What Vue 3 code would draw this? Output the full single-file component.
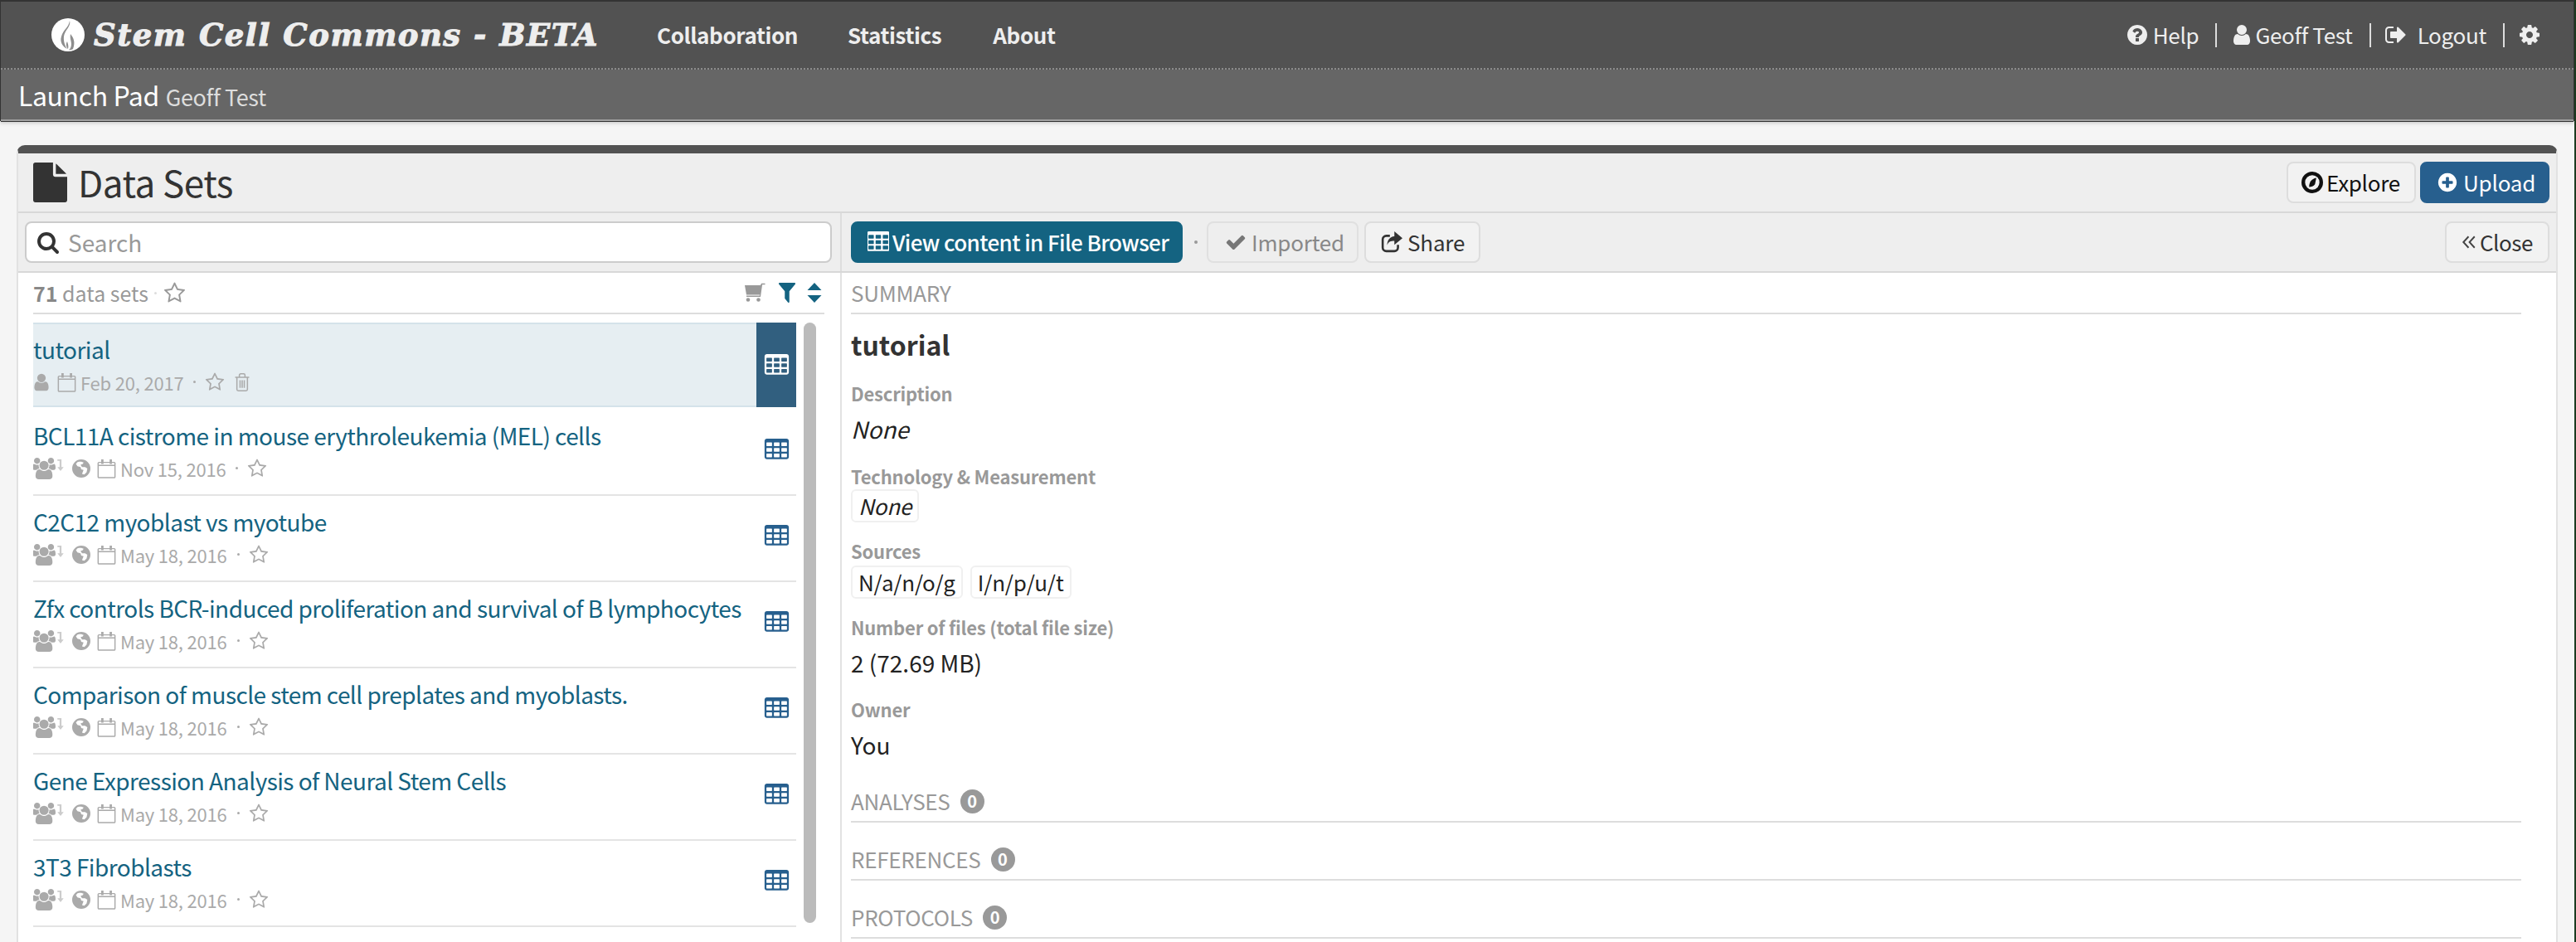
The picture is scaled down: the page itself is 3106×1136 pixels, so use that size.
<template>
  <div class="page">
    <svg class="defs" aria-hidden="true">
      <symbol id="i-star" viewBox="0 0 1792 1792"><path d="M1201 1004l306-297-422-62-189-382-189 382-422 62 306 297-73 421 378-199 377 199zm527-357q0 22-26 48l-363 354 86 500q1 7 1 20 0 50-41 50-19 0-40-12l-449-236-449 236q-22 12-40 12-21 0-31.5-14.5t-10.5-35.5q0-6 2-20l86-500-364-354q-25-27-25-48 0-37 56-46l502-73 225-455q19-41 49-41t49 41l225 455 502 73q56 9 56 46z"/></symbol>
      <symbol id="i-user" viewBox="0 0 1792 1792"><path d="M1536 1399q0 109-62.5 187t-150.5 78h-854q-88 0-150.5-78t-62.5-187q0-85 8.5-160.5t31.5-152 58.5-131 94-89 134.5-34.5q131 128 313 128t313-128q76 0 134.5 34.5t94 89 58.5 131 31.5 152 8.5 160.5zm-256-887q0 159-112.5 271.5t-271.5 112.5-271.5-112.5-112.5-271.5 112.5-271.5 271.5-112.5 271.5 112.5 112.5 271.5z"/></symbol>
      <symbol id="i-help" viewBox="0 0 1792 1792"><path d="M1024 1376v-192q0-14-9-23t-23-9h-192q-14 0-23 9t-9 23v192q0 14 9 23t23 9h192q14 0 23-9t9-23zm256-672q0-88-55.5-163t-138.5-116-170-41q-243 0-371 213-15 24 8 42l132 100q7 6 19 6 16 0 25-12 53-68 86-92 34-24 86-24 48 0 85.5 26t37.5 59q0 38-20 61t-68 45q-63 28-115.5 86.5t-52.5 125.5v36q0 14 9 23t23 9h192q14 0 23-9t9-23q0-19 21.5-49.5t54.5-49.5q32-18 49-28.5t46-35 44.5-48 28-60.5 12.5-81zm384 192q0 209-103 385.5t-279.5 279.5-385.5 103-385.5-103-279.5-279.5-103-385.5 103-385.5 279.5-279.5 385.5-103 385.5 103 279.5 279.5 103 385.5z"/></symbol>
      <symbol id="i-logout" viewBox="0 0 1792 1792"><path d="M704 1440q0 4 1 20t.5 26.5-3 23.5-10 19.5-20.5 6.5h-320q-119 0-203.5-84.5t-84.5-203.5v-704q0-119 84.5-203.5t203.5-84.5h320q13 0 22.5 9.5t9.5 22.5q0 4 1 20t.5 26.5-3 23.5-10 19.5-20.5 6.5h-320q-66 0-113 47t-47 113v704q0 66 47 113t113 47h312l11.5 1 11.5 3 8 5.5 7 9 2 13.5zm928-544q0 26-19 45l-544 544q-19 19-45 19t-45-19-19-45v-288h-448q-26 0-45-19t-19-45v-384q0-26 19-45t45-19h448v-288q0-26 19-45t45-19 45 19l544 544q19 19 19 45z"/></symbol>
      <symbol id="i-cog" viewBox="0 0 1792 1792"><path d="M1152 896q0-106-75-181t-181-75-181 75-75 181 75 181 181 75 181-75 75-181zm512-109v222q0 12-8 23t-20 13l-185 28q-19 54-39 91 35 50 107 138 10 12 10 25t-9 23q-27 37-99 108t-94 71q-12 0-26-9l-138-108q-44 23-91 38-16 136-29 186-7 28-36 28h-222q-14 0-24.5-8.5t-11.5-21.5l-28-184q-49-16-90-37l-141 107q-10 9-25 9-14 0-25-11-126-114-165-168-7-10-7-23 0-12 8-23 15-21 51-66.5t54-70.5q-27-50-41-99l-183-27q-13-2-21-12.5t-8-23.5v-222q0-12 8-23t19-13l186-28q14-46 39-92-40-57-107-138-10-12-10-24 0-10 9-23 26-36 98.5-107.5t94.5-71.5q13 0 26 10l138 107q44-23 91-38 16-136 29-186 7-28 36-28h222q14 0 24.5 8.5t11.5 21.5l28 184q49 16 90 37l142-107q9-9 24-9 13 0 25 10 129 119 165 170 7 8 7 22 0 12-8 23-15 21-51 66.5t-54 70.5q26 50 41 98l183 28q13 2 21 12.5t8 23.5z"/></symbol>
      <symbol id="i-search" viewBox="0 0 1792 1792"><path d="M1216 832q0-185-131.5-316.5t-316.5-131.5-316.5 131.5-131.5 316.5 131.5 316.5 316.5 131.5 316.5-131.5 131.5-316.5zm512 832q0 52-38 90t-90 38q-54 0-90-38l-343-342q-179 124-399 124-143 0-273.5-55.5t-225-150-150-225-55.5-273.5 55.5-273.5 150-225 225-150 273.5-55.5 273.5 55.5 225 150 150 225 55.5 273.5q0 220-124 399l343 343q37 37 37 90z"/></symbol>
      <symbol id="i-table" viewBox="128 128 1536 1536"><path d="M576 1376v-192q0-14-9-23t-23-9h-320q-14 0-23 9t-9 23v192q0 14 9 23t23 9h320q14 0 23-9t9-23zm0-384v-192q0-14-9-23t-23-9h-320q-14 0-23 9t-9 23v192q0 14 9 23t23 9h320q14 0 23-9t9-23zm512 384v-192q0-14-9-23t-23-9h-320q-14 0-23 9t-9 23v192q0 14 9 23t23 9h320q14 0 23-9t9-23zm-512-768v-192q0-14-9-23t-23-9h-320q-14 0-23 9t-9 23v192q0 14 9 23t23 9h320q14 0 23-9t9-23zm512 384v-192q0-14-9-23t-23-9h-320q-14 0-23 9t-9 23v192q0 14 9 23t23 9h320q14 0 23-9t9-23zm512 384v-192q0-14-9-23t-23-9h-320q-14 0-23 9t-9 23v192q0 14 9 23t23 9h320q14 0 23-9t9-23zm-512-768v-192q0-14-9-23t-23-9h-320q-14 0-23 9t-9 23v192q0 14 9 23t23 9h320q14 0 23-9t9-23zm512 384v-192q0-14-9-23t-23-9h-320q-14 0-23 9t-9 23v192q0 14 9 23t23 9h320q14 0 23-9t9-23zm0-384v-192q0-14-9-23t-23-9h-320q-14 0-23 9t-9 23v192q0 14 9 23t23 9h320q14 0 23-9t9-23zm128-320v1088q0 66-47 113t-113 47h-1344q-66 0-113-47t-47-113v-1088q0-66 47-113t113-47h1344q66 0 113 47t47 113z"/></symbol>
      <symbol id="i-check" viewBox="0 0 1792 1792"><path d="M1671 566q0 40-28 68l-724 724-136 136q-28 28-68 28t-68-28l-136-136-362-362q-28-28-28-68t28-68l136-136q28-28 68-28t68 28l294 295 656-657q28-28 68-28t68 28l136 136q28 28 28 68z"/></symbol>
      <symbol id="i-plus" viewBox="0 0 1792 1792"><path d="M1344 960v-128q0-26-19-45t-45-19h-256v-256q0-26-19-45t-45-19h-128q-26 0-45 19t-19 45v256h-256q-26 0-45 19t-19 45v128q0 26 19 45t45 19h256v256q0 26 19 45t45 19h128q26 0 45-19t19-45v-256h256q26 0 45-19t19-45zm320-64q0 209-103 385.5t-279.5 279.5-385.5 103-385.5-103-279.5-279.5-103-385.5 103-385.5 279.5-279.5 385.5-103 385.5 103 279.5 279.5 103 385.5z"/></symbol>
      <symbol id="i-filter" viewBox="128 256 1536 1408" preserveAspectRatio="none"><path d="M1595 295q17 41-14 70l-493 493v742q0 42-39 59-13 5-25 5-27 0-45-19l-256-256q-19-19-19-45v-486l-493-493q-31-29-14-70 17-39 59-39h1280q42 0 59 39z"/></symbol>
      <symbol id="i-file" viewBox="128 0 1536 1792"><path d="M1152 512v-472q22 14 36 28l408 408q14 14 28 36h-472zm-128 32q0 40 28 68t68 28h544v1056q0 40-28 68t-68 28h-1344q-40 0-68-28t-28-68v-1600q0-40 28-68t68-28h800v544z"/></symbol>
      <symbol id="i-users" viewBox="0 0 1920 1792"><path d="M529 896q-162 5-265 128h-134q-82 0-138-40.5t-56-118.5q0-353 124-353 6 0 43.5 21t97.5 42.5 119 21.5q67 0 133-23-5 37-5 66 0 139 81 256zm1071 637q0 120-73 189.5t-194 69.5h-874q-121 0-194-69.5t-73-189.5q0-53 3.5-103.5t14-109 26.5-108.5 43-97.5 62-81 85.5-53.5 111.5-20q10 0 43 21.5t73 48 107 48 135 21.5 135-21.5 107-48 73-48 43-21.5q61 0 111.5 20t85.5 53.5 62 81 43 97.5 26.5 108.5 14 109 3.5 103.5zm-1024-1277q0 106-75 181t-181 75-181-75-75-181 75-181 181-75 181 75 75 181zm704 384q0 159-112.5 271.5t-271.5 112.5-271.5-112.5-112.5-271.5 112.5-271.5 271.5-112.5 271.5 112.5 112.5 271.5zm576 225q0 78-56 118.5t-138 40.5h-134q-103-123-265-128 81-117 81-256 0-29-5-66 66 23 133 23 59 0 119-21.5t97.5-42.5 43.5-21q124 0 124 353zm-128-609q0 106-75 181t-181 75-181-75-75-181 75-181 181-75 181 75 75 181z"/></symbol>
      <symbol id="i-cal" viewBox="0 0 24 26"><path fill="none" stroke="currentColor" stroke-width="1.6" d="M2 5h20a1 1 0 0 1 1 1v18a1 1 0 0 1-1 1H2a1 1 0 0 1-1-1V6a1 1 0 0 1 1-1zM1 9h22"/><path d="M5 1h3v6H5zM16 1h3v6h-3z"/></symbol>
      <symbol id="i-trash" viewBox="0 0 22 26"><path fill="none" stroke="currentColor" stroke-width="1.8" d="M1 6h20M3.5 6v17a2 2 0 0 0 2 2h11a2 2 0 0 0 2-2V6M7 6V3a2 2 0 0 1 2-2h4a2 2 0 0 1 2 2v3M8 10v11M11 10v11M14 10v11"/></symbol>
      <symbol id="i-globe" viewBox="0 0 24 24"><path fill-rule="evenodd" d="M12 0a12 12 0 1 1 0 24a12 12 0 0 1 0-24zM7 3.500 5 6l2 3 4 1 1 3 3 1-2 5 3 1 3-3 1-5-3-2-4 0-2-3 3-1 1-2-3-1-3 0z"/></symbol>
      <symbol id="i-cart" viewBox="0 0 26 24"><path d="M1 3h19l-.8 11.500H3L1 3zM20 3l1-2.200h4.500v1.400h-3.400L20 17H3v-1.500h16z"/><circle cx="5" cy="20.500" r="2.300"/><circle cx="17.500" cy="20.500" r="2.300"/></symbol>
      <symbol id="i-sort" viewBox="0 0 18 24"><path d="M9 0l8.500 9H.5zM9 24L.5 15h17z"/></symbol>
      <symbol id="i-down" viewBox="0 0 8 16"><path d="M0 1h5.200v10H8l-4 5-4-5h2.800V3H0z"/></symbol>
    </svg>

    <header class="topbar">
      <nav class="nav">
        <a class="brand">
          <svg class="brand-icon" viewBox="0 0 40 40">
            <circle cx="20" cy="20" r="20" fill="#fff"/>
            <path fill="#8d8d8d" d="M22 3c2 7-6 11-7 19-.6 5 1 11 4 15-6-3-9-9-7-15 2-8 9-11 10-19zm1 16c4 5 6 10 3 18 0 0-3 2-5 1 2-1 3-4 3-7 0-4-2-7-1-12zm-4 9c1 3 2 6 1 9-2-2-3-6-1-9z"/>
          </svg>
          <span class="brand-text">Stem Cell Commons - BETA</span>
        </a>
        <a v-for="link in navLinks" :key="link" class="nav-link">{{ link }}</a>
        <div class="nav-right">
          <a class="nav-util"><svg class="util-icon"><use href="#i-help"/></svg>Help</a>
          <span class="nav-sep"></span>
          <a class="nav-util"><svg class="util-icon user-icon"><use href="#i-user"/></svg>Geoff Test</a>
          <span class="nav-sep"></span>
          <a class="nav-util"><svg class="util-icon logout-icon"><use href="#i-logout"/></svg>Logout</a>
          <span class="nav-sep"></span>
          <a class="nav-util"><svg class="util-icon cog-icon"><use href="#i-cog"/></svg></a>
        </div>
      </nav>
      <div class="subbar">
        <span class="sub-title">Launch Pad</span>
        <span class="sub-user">Geoff Test</span>
      </div>
    </header>

    <main class="panel">
      <div class="panel-head">
        <div class="panel-title">
          <svg class="file-icon"><use href="#i-file"/></svg>
          <h1>Data Sets</h1>
        </div>
        <div class="btn-row">
          <button class="btn">
            <svg class="btn-icon" viewBox="0 0 24 24">
              <circle cx="12" cy="12" r="10" fill="none" stroke="currentColor" stroke-width="4"/>
              <path d="M16.500 7 15 14c-1.500 2-4 3-6.500 3C8.500 12 11 8 16.500 7z"/>
            </svg>Explore
          </button>
          <button class="btn btn-upload"><svg class="btn-icon"><use href="#i-plus"/></svg>Upload</button>
        </div>
      </div>

      <div class="toolbar">
        <div class="toolbar-left">
          <label class="search">
            <svg class="search-icon"><use href="#i-search"/></svg>
            <input type="text" placeholder="Search" />
          </label>
        </div>
        <div class="toolbar-right">
          <button class="btn btn-view"><svg class="btn-icon view-icon"><use href="#i-table"/></svg>View content in File Browser</button>
          <span class="dot"></span>
          <button class="btn btn-muted"><svg class="btn-icon"><use href="#i-check"/></svg>Imported</button>
          <button class="btn btn-share">
            <svg class="btn-icon" viewBox="0 0 24 24">
              <path fill="none" stroke="currentColor" stroke-width="2.400" d="M10 5H6a4 4 0 0 0-4 4v9a4 4 0 0 0 4 4h9a4 4 0 0 0 4-4v-3"/>
              <path d="M15 0l9 7.500-9 7.500v-4.500c-4 0-7 1-8 5 0-6 3-9.500 8-10z"/>
            </svg>Share
          </button>
          <button class="btn btn-close">
            <svg class="close-icon" viewBox="0 0 16 16"><path fill="none" stroke="currentColor" stroke-width="1.700" d="M7.500 2 2 8l5.500 6M14 2 8.500 8l5.500 6"/></svg>Close
          </button>
        </div>
      </div>

      <div class="content">
        <section class="list-col">
          <div class="list-head">
            <span class="count"><b>71</b> data sets</span>
            <span class="small-dot"></span>
            <svg class="head-star"><use href="#i-star"/></svg>
            <span class="head-tools">
              <svg class="tool cart"><use href="#i-cart"/></svg>
              <svg class="tool funnel"><use href="#i-filter"/></svg>
              <svg class="tool sorter"><use href="#i-sort"/></svg>
            </span>
          </div>
          <div class="list">
            <div
              v-for="item in dataSets"
              :key="item.title"
              class="row"
              :class="{ active: item.owned }"
            >
              <div class="row-main">
                <a class="row-title">{{ item.title }}</a>
                <div class="row-meta">
                  <template v-if="item.owned">
                    <svg class="m-user"><use href="#i-user"/></svg>
                  </template>
                  <template v-else>
                    <svg class="m-users"><use href="#i-users"/></svg>
                    <svg class="m-down"><use href="#i-down"/></svg>
                    <svg class="m-globe"><use href="#i-globe"/></svg>
                  </template>
                  <svg class="m-cal"><use href="#i-cal"/></svg>
                  <span class="m-date">{{ item.date }}</span>
                  <span class="m-dot"></span>
                  <svg class="m-star"><use href="#i-star"/></svg>
                  <svg v-if="item.owned" class="m-trash"><use href="#i-trash"/></svg>
                </div>
              </div>
              <div class="row-action">
                <svg class="grid-icon"><use href="#i-table"/></svg>
              </div>
            </div>
            <div class="scrollbar"></div>
          </div>
        </section>

        <section class="detail-col">
          <h3 class="sec-head">SUMMARY</h3>
          <h2 class="detail-name">tutorial</h2>
          <div class="label first">Description</div>
          <div class="value"><em>None</em></div>
          <div class="label">Technology &amp; Measurement</div>
          <div class="tags tech"><span class="tag"><em>None</em></span></div>
          <div class="label src">Sources</div>
          <div class="tags srcs">
            <span v-for="s in sources" :key="s" class="tag">{{ s }}</span>
          </div>
          <div class="label num">Number of files (total file size)</div>
          <div class="value">2 (72.69 MB)</div>
          <div class="label owner">Owner</div>
          <div class="value">You</div>
          <div class="sections">
            <h3 v-for="s in sections" :key="s" class="sec-head sec-count">
              {{ s }} <span class="badge">0</span>
            </h3>
          </div>
        </section>
      </div>
    </main>
  </div>
</template>

<script setup>
const navLinks = ['Collaboration', 'Statistics', 'About']
const sources = ['N/a/n/o/g', 'I/n/p/u/t']
const sections = ['ANALYSES', 'REFERENCES', 'PROTOCOLS']

const dataSets = [
  { title: 'tutorial', date: 'Feb 20, 2017', owned: true },
  { title: 'BCL11A cistrome in mouse erythroleukemia (MEL) cells', date: 'Nov 15, 2016' },
  { title: 'C2C12 myoblast vs myotube', date: 'May 18, 2016' },
  { title: 'Zfx controls BCR-induced proliferation and survival of B lymphocytes', date: 'May 18, 2016' },
  { title: 'Comparison of muscle stem cell preplates and myoblasts.', date: 'May 18, 2016' },
  { title: 'Gene Expression Analysis of Neural Stem Cells', date: 'May 18, 2016' },
  { title: '3T3 Fibroblasts', date: 'May 18, 2016' }
]
</script>

<style>
html, body {
  margin: 0;
  background: #1c3a20;
}
</style>

<style scoped>
.page {
  width: 3104px;
  height: 1136px;
  overflow: hidden;
  background: #f5f5f5;
  font-family: "Noto Sans CJK SC", "Open Sans", sans-serif;
  color: #222;
}
.defs {
  position: absolute;
  width: 0;
  height: 0;
}
svg {
  fill: currentColor;
  flex: none;
}

/* top bars */
.topbar {
  box-shadow: 0 2px 5px rgba(0, 0, 0, 0.2);
  border-left: 1px solid #333;
  border-right: 1px solid #333;
}
.nav {
  display: flex;
  align-items: center;
  height: 80px;
  border-top: 2px solid #333;
  background: #525252;
  border-bottom: 2px dotted #8c8c8c;
  color: #eee;
}
.brand {
  display: flex;
  align-items: center;
  width: 791px;
  padding-left: 61px;
  box-sizing: border-box;
}
.brand-icon {
  width: 40px;
  height: 40px;
}
.brand-text {
  margin-left: 11px;
  font-family: "DejaVu Serif", serif;
  font-weight: 700;
  font-style: italic;
  font-size: 37px;
  line-height: 44px;
  letter-spacing: 1.500px;
  -webkit-text-stroke: 1px #eee;
  color: #eee;
  white-space: nowrap;
}
.nav-link {
  margin-right: 60px;
  font-size: 26px;
  font-weight: 700;
  line-height: 40px;
  letter-spacing: -0.400px;
}
.nav-link:nth-of-type(3) {
  margin-right: 62px;
}
.nav-right {
  display: flex;
  align-items: center;
  margin-left: auto;
  padding-right: 39px;
  font-size: 26px;
  letter-spacing: -0.300px;
}
.nav-util {
  display: flex;
  align-items: center;
  line-height: 40px;
}
.util-icon {
  width: 28px;
  height: 28px;
  margin-right: 5px;
}
.user-icon {
  margin-right: 2px;
}
.logout-icon {
  margin-right: 12px;
}
.cog-icon {
  margin-right: 0;
}
.nav-sep {
  width: 2px;
  height: 29px;
  margin: 0 16px 0 20px;
  background: #ddd;
}
.subbar {
  display: flex;
  align-items: baseline;
  height: 60px;
  line-height: 60px;
  padding-left: 21px;
  background: #666;
  border-bottom: 2px solid #a0a0a0;
  color: #fff;
  position: relative;
}
.subbar::after {
  content: "";
  position: absolute;
  left: 0;
  right: 0;
  bottom: -3px;
  height: 1px;
  background: #333;
}
.sub-title {
  font-size: 32px;
  letter-spacing: -0.400px;
}
.sub-user {
  margin-left: 8px;
  font-size: 27px;
  letter-spacing: -0.400px;
  color: #ddd;
}

/* panel */
.panel {
  width: 3064px;
  box-sizing: border-box;
  margin: 29px 0 0 20px;
  border-top: 10px solid #525252;
  border-left: 2px solid #e2e2e2;
  border-right: 2px solid #e2e2e2;
  border-radius: 10px 10px 0 0;
  background: #fff;
}
.panel-head {
  display: flex;
  align-items: center;
  justify-content: space-between;
  height: 70px;
  padding: 0 8px 0 18px;
  background: #eee;
  border-bottom: 2px solid #d8d8d8;
}
.panel-title {
  display: flex;
  align-items: center;
}
.file-icon {
  width: 41px;
  height: 48px;
  color: #333;
}
.panel-title h1 {
  margin: -2px 0 0 13px;
  font-size: 44px;
  font-weight: 400;
  line-height: 60px;
  letter-spacing: -0.500px;
  color: #333;
}
.btn-row {
  display: flex;
  gap: 5px;
}
.btn {
  display: inline-flex;
  align-items: center;
  height: 50px;
  box-sizing: border-box;
  padding: 0 18px;
  border: 2px solid #ddd;
  border-radius: 8px;
  background: #f2f2f2;
  font-family: inherit;
  font-size: 26px;
  line-height: 40px;
  letter-spacing: -0.200px;
  color: #333;
  white-space: nowrap;
}
.btn-icon {
  width: 26px;
  height: 26px;
  margin-right: 6px;
}
.btn-row .btn:first-child {
  width: 156px;
  padding-left: 16px;
  letter-spacing: -0.300px;
  color: #111;
}
.btn-row .btn:first-child .btn-icon {
  margin-right: 4px;
}
.btn-upload {
  width: 156px;
  border-color: #275f8e;
  background: #275f8e;
  color: #fff;
}
.toolbar {
  display: flex;
  height: 70px;
  background: #eee;
  border-bottom: 2px solid #d8d8d8;
}
.toolbar-left {
  display: flex;
  align-items: center;
  width: 993px;
  box-sizing: border-box;
  padding-left: 8px;
  border-right: 2px solid #ddd;
}
.search {
  display: flex;
  align-items: center;
  width: 973px;
  height: 50px;
  box-sizing: border-box;
  padding-left: 12px;
  border: 2px solid #ccc;
  border-radius: 8px;
  background: #fff;
}
.search-icon {
  width: 28px;
  height: 28px;
  color: #333;
}
.search input {
  flex: 1;
  min-width: 0;
  margin-left: 10px;
  border: 0;
  outline: 0;
  padding: 0;
  font-family: inherit;
  font-size: 28px;
  background: transparent;
}
.search input::placeholder {
  color: #999;
  opacity: 1;
}
.toolbar-right {
  display: flex;
  flex: 1;
  align-items: center;
  padding: 0 8px 0 11px;
}
.btn-view {
  width: 400px;
  padding: 0 0 0 18px;
  border-color: #146381;
  background: #146381;
  color: #fff;
  font-weight: 500;
  letter-spacing: -0.600px;
}
.view-icon {
  margin-right: 4px;
}
.dot {
  width: 4px;
  height: 4px;
  margin: 0 11px 0 14px;
  border-radius: 50%;
  background: #999;
}
.btn-muted {
  width: 183px;
  padding: 0 0 0 20px;
  background: #eee;
  border-color: #e0e0e0;
  color: #888;
}
.btn-muted .btn-icon {
  color: #777;
}
.btn-share {
  width: 140px;
  margin-left: 7px;
  padding: 0 0 0 18px;
}
.btn-close {
  width: 126px;
  margin-left: auto;
  padding: 0 0 0 18px;
  letter-spacing: -0.500px;
}
.close-icon {
  width: 18px;
  height: 18px;
  margin-right: 4px;
  color: #444;
}

/* layout below the toolbars */
.content {
  display: flex;
}
.list-col {
  width: 993px;
  box-sizing: border-box;
  padding-left: 18px;
  border-right: 2px solid #e2e2e2;
}
.list-head {
  display: flex;
  align-items: center;
  width: 954px;
  height: 48px;
  border-bottom: 2px solid #ddd;
  color: #999;
}
.count {
  font-size: 25px;
  line-height: 50px;
}
.count b {
  font-weight: 700;
  color: #888;
}
.small-dot {
  width: 3px;
  height: 3px;
  margin: 0 8px 0 7px;
  border-radius: 50%;
  background: #ddd;
}
.head-star {
  width: 27px;
  height: 27px;
}
.head-tools {
  display: flex;
  align-items: center;
  margin-left: auto;
  padding-right: 3px;
}
.tool {
  height: 24px;
}
.cart {
  width: 28px;
  color: #999;
}
.funnel {
  width: 22px;
  margin-left: 14px;
  color: #146381;
}
.sorter {
  width: 18px;
  margin-left: 13px;
  color: #146381;
}
.list {
  position: relative;
  width: 944px;
  margin-top: 10px;
}
.scrollbar {
  position: absolute;
  top: 0;
  left: 929px;
  width: 15px;
  height: 724px;
  border-radius: 8px;
  background: #bbb;
}
.row {
  display: flex;
  width: 920px;
  height: 104px;
  box-sizing: border-box;
  border-bottom: 2px solid #e4e4e4;
}
.row.active {
  height: 102px;
  margin-bottom: 3px;
  background: #e6eef2;
  border-top: 2px solid #d4e2ea;
  border-bottom: 2px solid #d4e2ea;
}
.row-main {
  flex: 1;
  min-width: 0;
  padding-top: 11px;
}
.row.active .row-main {
  padding-top: 10px;
}
.row-title {
  display: block;
  font-size: 28px;
  line-height: 40px;
  letter-spacing: -0.550px;
  color: #146381;
  white-space: nowrap;
}
.row-meta {
  display: flex;
  align-items: center;
  height: 39px;
  font-size: 22px;
  letter-spacing: -0.200px;
  color: #aaa;
}
.m-user {
  width: 24px;
  height: 24px;
  margin-left: -2px;
}
.m-users {
  width: 28px;
  height: 26px;
}
.m-down {
  width: 8px;
  height: 15px;
  margin-left: 1px;
  margin-bottom: 8px;
  color: #ccc;
}
.m-globe {
  width: 22px;
  height: 22px;
  margin-left: 10px;
}
.m-cal {
  width: 23px;
  height: 24px;
  margin-left: 8px;
}
.m-user + .m-cal {
  margin-left: 7px;
}
.m-date {
  margin-left: 5px;
  line-height: 30px;
}
.m-dot {
  width: 3px;
  height: 3px;
  margin: 0 11px 0 12px;
  border-radius: 50%;
  background: #aaa;
}
.m-star {
  width: 24px;
  height: 24px;
}
.m-trash {
  width: 20px;
  height: 22px;
  margin-left: 11px;
}
.row-action {
  display: flex;
  align-items: center;
  justify-content: center;
  width: 48px;
  padding-bottom: 6px;
  box-sizing: border-box;
  color: #275f8e;
}
.row.active .row-action {
  margin: -2px 0;
  height: 102px;
  padding-bottom: 0;
  background: #315f7f;
  color: #fff;
}
.grid-icon {
  width: 31px;
  height: 27px;
}

/* summary column */
.detail-col {
  width: 2014px;
  margin-left: 11px;
  padding-bottom: 40px;
}
.sec-head {
  display: flex;
  align-items: center;
  height: 48px;
  margin: 0;
  border-bottom: 2px solid #ddd;
  font-size: 26px;
  font-weight: 400;
  line-height: 50px;
  letter-spacing: -0.300px;
  color: #999;
}
.detail-name {
  margin: 16px 0 0;
  font-size: 32px;
  font-weight: 700;
  line-height: 40px;
  color: #333;
}
.label {
  margin-top: 25px;
  font-size: 22px;
  font-weight: 700;
  line-height: 28px;
  letter-spacing: -0.200px;
  color: #999;
}
.label.src {
  margin-top: 20px;
}
.label.num {
  margin-top: 20px;
}
.label.owner {
  margin-top: 24px;
}
.value {
  margin-top: 11px;
  font-size: 28px;
  line-height: 36px;
  color: #222;
}
.tags {
  display: flex;
  gap: 9px;
}
.tags.tech {
  margin-top: 2px;
}
.tags.srcs {
  margin-top: 4px;
}
.tag {
  height: 40px;
  box-sizing: border-box;
  padding: 0 7px;
  border: 2px solid #f0f0f0;
  border-radius: 6px;
  font-size: 26px;
  line-height: 36px;
  letter-spacing: -0.200px;
  color: #222;
}
.sections {
  margin-top: 26px;
}
.sec-count {
  margin-bottom: 20px;
}
.badge {
  display: inline-block;
  width: 29px;
  height: 29px;
  margin-left: 12px;
  border-radius: 50%;
  background: #999;
  font-size: 20px;
  font-weight: 700;
  line-height: 28px;
  text-align: center;
  letter-spacing: 0;
  color: #fff;
}
</style>
